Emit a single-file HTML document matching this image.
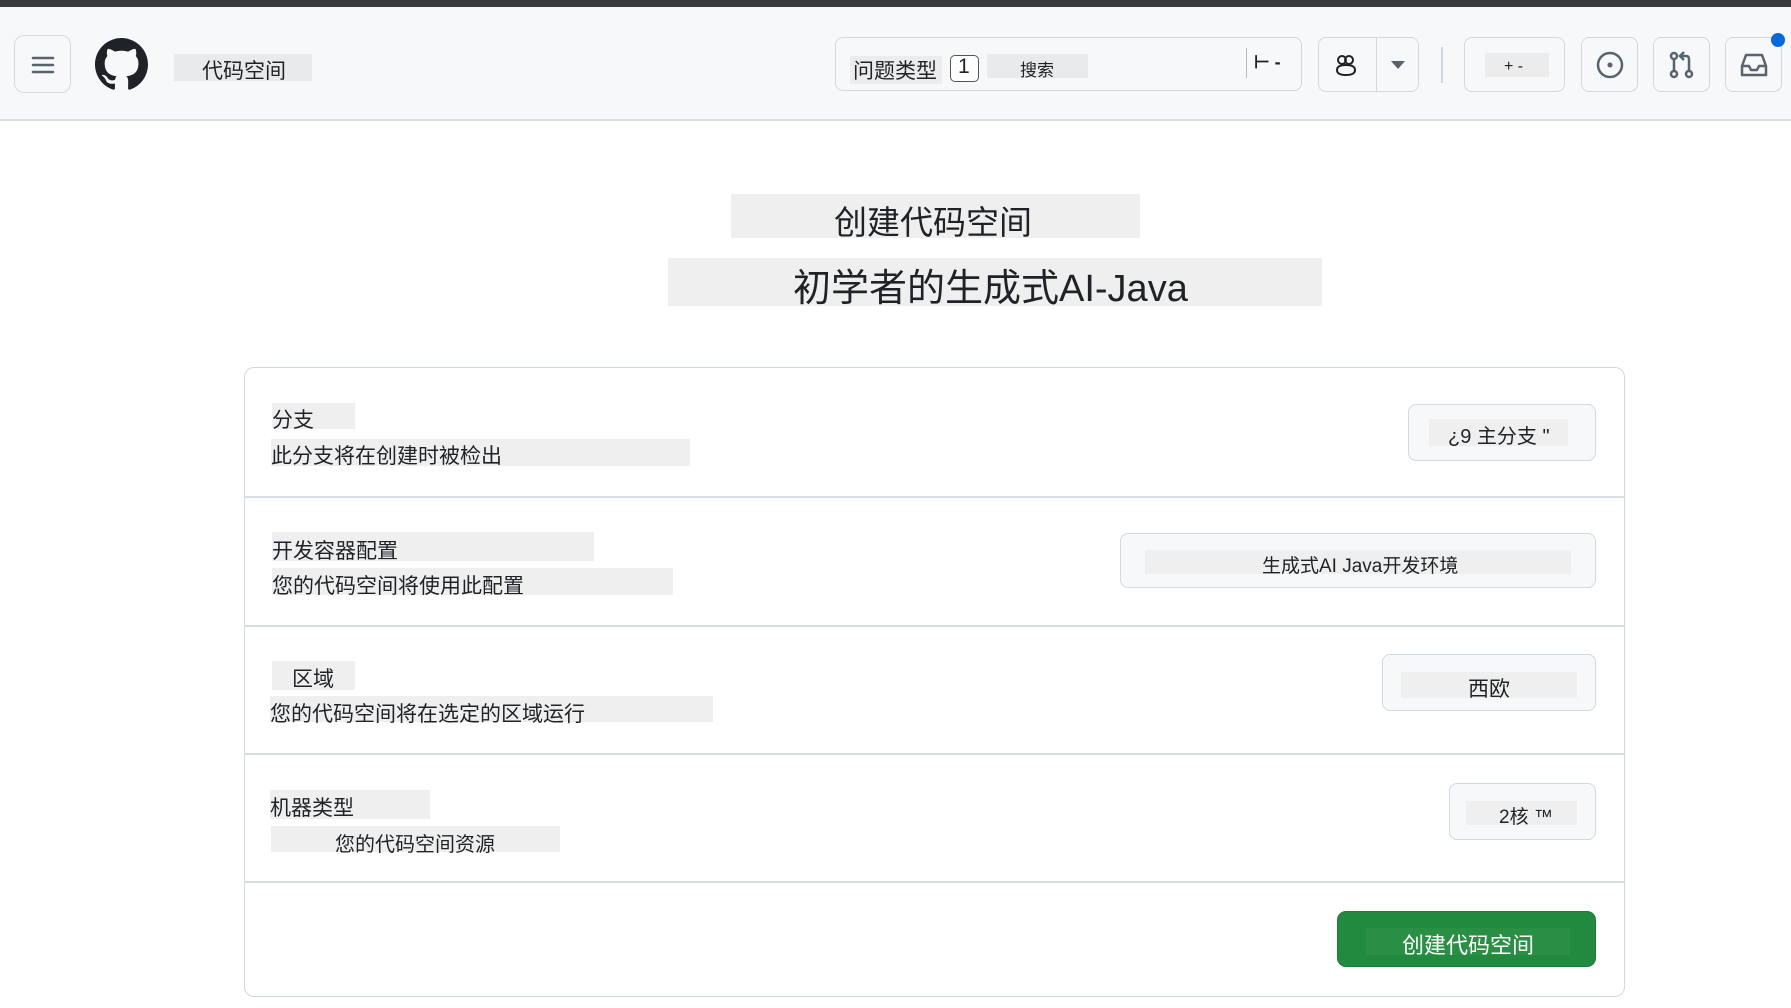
<!DOCTYPE html>
<html><head><meta charset="utf-8"><style>
*{box-sizing:border-box;margin:0;padding:0}
body{width:1791px;height:1008px;background:#fff;position:relative;overflow:hidden;font-family:"Liberation Sans","Noto Sans CJK SC",sans-serif;color:#1f2328}
.a{position:absolute}
.hl{background:#efefef}
.btn{position:absolute;border:1px solid #d1d9e0;border-radius:8px;background:#f6f8fa}
.t{position:absolute;white-space:nowrap}
</style></head><body>
<div class="a" style="left:0;top:0;width:1791px;height:7px;background:#3a3a3a"></div>
<div class="a" style="left:0;top:7px;width:1791px;height:114px;background:#f6f8fa;border-bottom:2px solid #d8dee4"></div>
<div class="btn" style="left:14px;top:35px;width:57px;height:58px;border-radius:10px">
<svg class="a" style="left:16px;top:19px" width="24" height="20"><path d="M2 3h20M2 10h20M2 17h20" stroke="#59636e" stroke-width="2.5" stroke-linecap="round"/></svg></div>
<svg class="a" style="left:95px;top:38px" width="53" height="53" viewBox="0 0 16 16"><path fill="#1f2328" d="M8 0C3.58 0 0 3.58 0 8c0 3.540 2.29 6.53 5.47 7.59.4.07.55-.17.55-.38 0-.19-.01-.82-.01-1.490-2.010.37-2.530-.49-2.690-.94-.09-.23-.48-.94-.82-1.130-.28-.15-.68-.52-.01-.53.63-.01 1.080.58 1.230.82.72 1.210 1.870.87 2.330.66.07-.52.28-.87.51-1.070-1.780-.2-3.640-.89-3.640-3.950 0-.87.31-1.590.82-2.150-.08-.2-.36-1.020.08-2.120 0 0 .67-.21 2.200.82.64-.18 1.320-.27 2-.27.68 0 1.360.09 2 .27 1.530-1.040 2.200-.82 2.200-.82.44 1.100.16 1.920.08 2.120.51.56.82 1.270.82 2.150 0 3.070-1.870 3.750-3.650 3.950.29.25.54.73.54 1.480 0 1.070-.01 1.930-.01 2.200 0 .21.15.46.55.38A8.013 8.013 0 0016 8c0-4.420-3.580-8-8-8z"/></svg>
<div class="a hl" style="left:174px;top:54px;width:138px;height:27px;background:#e9eaeb"></div>
<div class="t" style="left:202px;top:55px;font-size:21px">代码空间</div>

<div class="btn" style="left:835px;top:37px;width:467px;height:54px;background:#f6f8fa"></div>
<div class="a" style="left:850px;top:56px;width:92px;height:28px;background:#ececec"></div>
<div class="t" style="left:853px;top:55px;font-size:21px">问题类型</div>
<div class="a" style="left:950px;top:55px;width:29px;height:27px;border:1px solid #555;border-radius:5px;background:#fff"></div>
<div class="t" style="left:958px;top:55px;font-size:21px">1</div>
<div class="a" style="left:987px;top:54px;width:101px;height:24px;background:#e9eaeb"></div>
<div class="t" style="left:1020px;top:56px;font-size:17px">搜索</div>
<div class="a" style="left:1246px;top:48px;width:1px;height:30px;background:#bbb"></div>
<div class="t" style="left:1254px;top:52px;font-size:18px;font-weight:bold">⊢ -</div>

<div class="btn" style="left:1318px;top:37px;width:101px;height:55px"></div>
<div class="a" style="left:1376px;top:37px;width:1px;height:55px;background:#d1d9e0"></div>
<svg class="a" style="left:1333px;top:52px" width="26" height="26" viewBox="0 0 26 26"><circle cx="9" cy="8" r="4" fill="none" stroke="#1f2328" stroke-width="2"/><circle cx="16" cy="8" r="4" fill="none" stroke="#1f2328" stroke-width="2"/><path d="M4 18c0-4 4-5 9-5s9 1 9 5c0 4-4 5-9 5s-9-1-9-5z" fill="none" stroke="#1f2328" stroke-width="2"/></svg>
<svg class="a" style="left:1391px;top:61px" width="14" height="8"><path d="M0 0h14L7 8z" fill="#59636e"/></svg>
<div class="a" style="left:1441px;top:47px;width:2px;height:36px;background:#d1d9e0"></div>
<div class="btn" style="left:1464px;top:37px;width:101px;height:55px"></div>
<div class="a" style="left:1485px;top:53px;width:64px;height:24px;background:#ececec"></div>
<div class="t" style="left:1504px;top:58px;font-size:16px">+ -</div>
<div class="btn" style="left:1581px;top:37px;width:57px;height:55px"></div>
<svg class="a" style="left:1595px;top:50px" width="30" height="30"><circle cx="15" cy="15" r="12" fill="none" stroke="#59636e" stroke-width="2.5"/><circle cx="15" cy="15" r="2.5" fill="#59636e"/></svg>
<div class="btn" style="left:1653px;top:37px;width:57px;height:55px"></div>
<svg class="a" style="left:1668px;top:50px" width="28" height="30"><circle cx="6" cy="6" r="3" fill="none" stroke="#59636e" stroke-width="2.5"/><circle cx="6" cy="24" r="3" fill="none" stroke="#59636e" stroke-width="2.5"/><circle cx="21" cy="24" r="3" fill="none" stroke="#59636e" stroke-width="2.5"/><path d="M6 9v12M21 21V9q0-3-3-3h-4M16 2l-4 4 4 4" fill="none" stroke="#59636e" stroke-width="2.5"/></svg>
<div class="btn" style="left:1725px;top:37px;width:57px;height:55px"></div>
<svg class="a" style="left:1739px;top:51px" width="30" height="28"><path d="M3 15l4-11h16l4 11v9H3zM3 15h7l2 4h6l2-4h7" fill="none" stroke="#59636e" stroke-width="2.5" stroke-linejoin="round"/></svg>
<div class="a" style="left:1771px;top:33px;width:14px;height:14px;border-radius:50%;background:#0969da"></div>

<div class="a" style="left:731px;top:194px;width:409px;height:44px;background:#efefef"></div>
<div class="t" style="left:834px;top:196px;font-size:33px">创建代码空间</div>
<div class="a" style="left:668px;top:258px;width:654px;height:48px;background:#efefef"></div>
<div class="t" style="left:793px;top:257px;font-size:38px">初学者的生成式AI-Java</div>

<div class="a" style="left:244px;top:367px;width:1381px;height:630px;border:1.5px solid #d1d9e0;border-radius:10px"></div>
<div class="a" style="left:245px;top:496px;width:1379px;height:1.5px;background:#d8dee4"></div>
<div class="a" style="left:245px;top:625px;width:1379px;height:1.5px;background:#d8dee4"></div>
<div class="a" style="left:245px;top:753px;width:1379px;height:1.5px;background:#d8dee4"></div>
<div class="a" style="left:245px;top:881px;width:1379px;height:1.5px;background:#d8dee4"></div>

<div class="a hl" style="left:272px;top:403px;width:83px;height:26px"></div>
<div class="t" style="left:272px;top:404px;font-size:21px">分支</div>
<div class="a hl" style="left:271px;top:439px;width:419px;height:27px"></div>
<div class="t" style="left:271px;top:440px;font-size:21px">此分支将在创建时被检出</div>
<div class="btn" style="left:1408px;top:404px;width:188px;height:57px"></div>
<div class="a hl" style="left:1429px;top:419px;width:139px;height:27px"></div>
<div class="t" style="left:1448px;top:420px;font-size:20px">¿9 主分支 "</div>

<div class="a hl" style="left:272px;top:532px;width:322px;height:29px"></div>
<div class="t" style="left:272px;top:535px;font-size:21px">开发容器配置</div>
<div class="a hl" style="left:272px;top:568px;width:401px;height:27px"></div>
<div class="t" style="left:272px;top:570px;font-size:21px">您的代码空间将使用此配置</div>
<div class="btn" style="left:1120px;top:533px;width:476px;height:55px"></div>
<div class="a hl" style="left:1145px;top:550px;width:426px;height:24px"></div>
<div class="t" style="left:1262px;top:551px;font-size:19px">生成式AI Java开发环境</div>

<div class="a hl" style="left:272px;top:661px;width:83px;height:29px"></div>
<div class="t" style="left:292px;top:663px;font-size:21px">区域</div>
<div class="a hl" style="left:270px;top:696px;width:443px;height:26px"></div>
<div class="t" style="left:270px;top:698px;font-size:21px">您的代码空间将在选定的区域运行</div>
<div class="btn" style="left:1382px;top:654px;width:214px;height:57px"></div>
<div class="a hl" style="left:1401px;top:672px;width:176px;height:26px"></div>
<div class="t" style="left:1468px;top:673px;font-size:21px">西欧</div>

<div class="a hl" style="left:270px;top:790px;width:160px;height:29px"></div>
<div class="t" style="left:270px;top:792px;font-size:21px">机器类型</div>
<div class="a hl" style="left:271px;top:826px;width:289px;height:26px"></div>
<div class="t" style="left:335px;top:828px;font-size:20px">您的代码空间资源</div>
<div class="btn" style="left:1449px;top:783px;width:147px;height:57px"></div>
<div class="a hl" style="left:1466px;top:801px;width:111px;height:24px"></div>
<div class="t" style="left:1499px;top:802px;font-size:19px">2核 ™</div>

<div class="a" style="left:1337px;top:911px;width:259px;height:56px;background:#228a3e;border-radius:9px;border:1px solid #1e7a37"></div>
<div class="a" style="left:1366px;top:928px;width:204px;height:27px;background:#2a8f45"></div>
<div class="t" style="left:1402px;top:928px;font-size:22px;color:#fff">创建代码空间</div>
</body></html>
